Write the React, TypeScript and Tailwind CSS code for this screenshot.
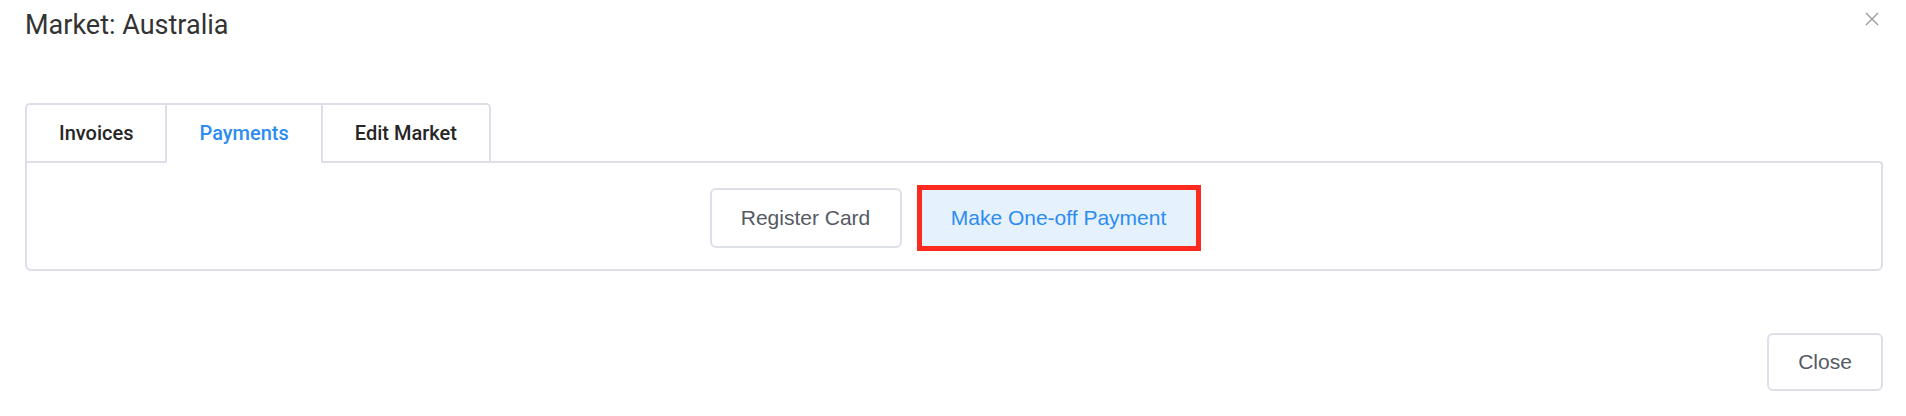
import React from 'react';

const tabs = ['Invoices', 'Payments', 'Edit Market'];

export default function App() {
  const active = 1;

  return (
    <div className="relative h-[416px] w-full bg-white font-['Roboto',sans-serif]">
      {/* Close icon */}
      <button className="absolute right-[27px] top-[12px] h-[14px] w-[14px]" aria-label="close">
        <svg viewBox="0 0 14 14" className="h-[14px] w-[14px]" fill="none" stroke="#9a9a9a" strokeWidth="1.4">
          <path d="M1 1L13 13M13 1L1 13" />
        </svg>
      </button>

      <div className="ml-[25px] mr-[23px]">
        <h1 className="pt-[9px] text-[27px] leading-[32px] font-normal text-[#333]">Market: Australia</h1>

        <div className="mt-[62px]">
          {/* Tab bar */}
          <div className="flex items-end">
            {tabs.map((t, i) => (
              <div
                key={t}
                className={
                  i === active
                    ? 'relative z-10 -mb-[2px] flex h-[60px] items-start border-t-2 border-l-2 border-[#dde0e8] bg-white px-8 pt-[16px] text-[20px] leading-[24px] font-medium text-[#2d8cf0]'
                    : i === tabs.length - 1
                      ? 'flex h-[58px] items-start border-t-2 border-l-2 border-r-2 border-[#dde0e8] rounded-tr-[5px] px-8 pt-[16px] text-[20px] leading-[24px] font-medium text-[#262626]'
                      : 'flex h-[58px] items-start border-t-2 border-l-2 border-[#dde0e8] rounded-tl-[5px] px-8 pt-[16px] text-[20px] leading-[24px] font-medium text-[#262626]'
                }
              >
                {t}
              </div>
            ))}
          </div>

          {/* Panel */}
          <div className="flex h-[110px] items-center justify-center gap-[17px] rounded-b-[6px] rounded-tr-[4px] border-2 border-[#dde0e8] pt-[3px] font-['Liberation_Sans',Arial,sans-serif]">
            <button className="h-[60px] w-[192px] rounded-[6px] border-2 border-[#dde0e8] bg-white text-[21px] text-[#555a63]">
              Register Card
            </button>
            <div className="relative">
              <button className="h-[60px] w-[280px] rounded-[6px] border-2 border-[#c6e0f7] bg-[#e5f1fc] text-[21px] text-[#2d8cf0]">
                Make One-off Payment
              </button>
              <div className="pointer-events-none absolute -inset-x-[2px] -top-[3px] -bottom-[3px] border-[5px] border-[#ff2a1f]" />
            </div>
          </div>
        </div>

        <div className="mt-[62px] flex justify-end">
          <button className="h-[58px] w-[116px] rounded-[6px] border-2 border-[#dde0e8] bg-white font-['Liberation_Sans',Arial,sans-serif] text-[21px] text-[#555a63]">
            Close
          </button>
        </div>
      </div>
    </div>
  );
}
